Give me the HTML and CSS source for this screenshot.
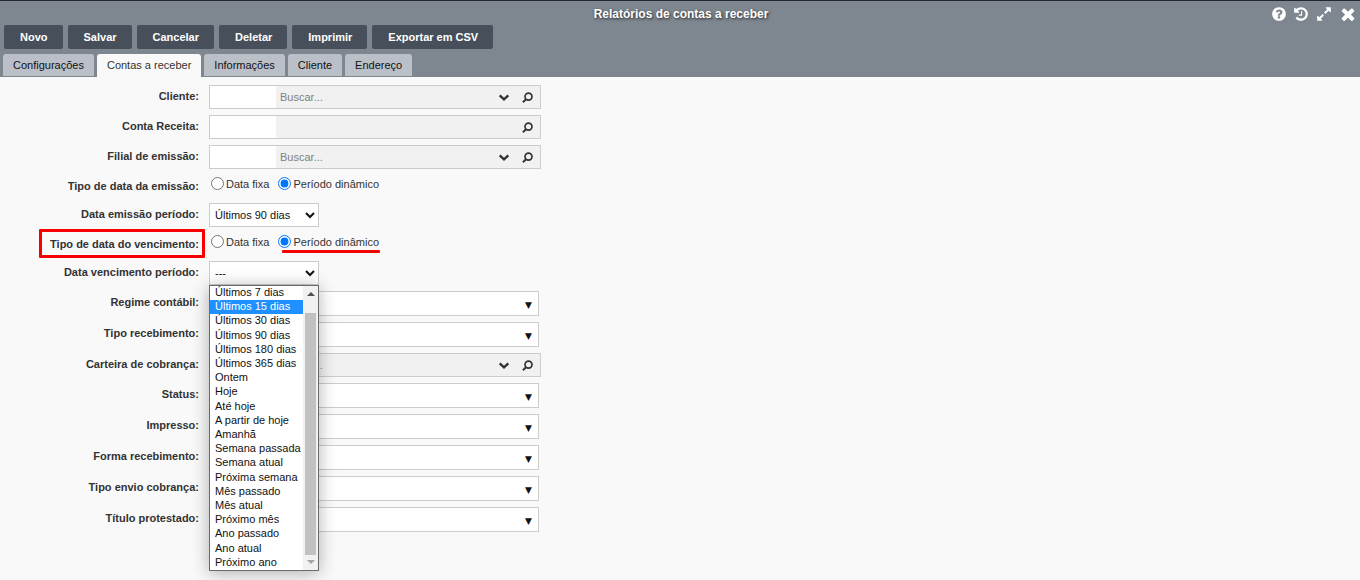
FILE: index.html
```html
<!DOCTYPE html>
<html lang="pt-BR">
<head>
<meta charset="utf-8">
<title>Relatórios de contas a receber</title>
<link rel="stylesheet" href="styles.css">
</head>
<body>
<svg class="symbols" aria-hidden="true">
  <symbol id="i-help" viewBox="0 0 1792 1792"><path d="M1024 1376v-192q0-14-9-23t-23-9h-192q-14 0-23 9t-9 23v192q0 14 9 23t23 9h192q14 0 23-9t9-23zm256-672q0-88-55.500-163t-138.500-116-170-41q-243 0-371 213-15 24 8 42l132 100q7 6 19 6 16 0 25-12 53-68 86-92 34-24 86-24 48 0 85.500 26t37.500 59q0 38-20 61t-68 45q-63 28-115.500 86.500t-52.500 125.500v36q0 14 9 23t23 9h192q14 0 23-9t9-23q0-19 21.500-49.500t54.500-49.500q32-18 49-28.500t46-35 44.500-48 28-60.500 12.500-81zm384 192q0 209-103 385.500t-279.500 279.500-385.500 103-385.500-103-279.500-279.500-103-385.500 103-385.500 279.500-279.500 385.500-103 385.500 103 279.500 279.500 103 385.500z"/></symbol>
  <symbol id="i-history" viewBox="0 0 1792 1792"><path d="M1664 896q0 156-61 298t-164 245-245 164-298 61q-172 0-327-72.500t-264-204.500q-7-10-6.500-22.500t8.500-20.500l137-138q10-9 25-9 16 2 23 12 73 95 179 147t225 52q104 0 198.500-40.500t163.500-109.500 109.500-163.500 40.500-198.500-40.500-198.500-109.500-163.500-163.500-109.500-198.500-40.500q-98 0-188 35.500t-160 101.500l137 138q31 30 14 69-17 40-59 40h-448q-26 0-45-19t-19-45v-448q0-42 40-59 39-17 69 14l130 129q107-101 244.500-156.500t284.500-55.500q156 0 298 61t245 164 164 245 61 298zm-640-288v448q0 14-9 23t-23 9h-320q-14 0-23-9t-9-23v-64q0-14 9-23t23-9h224v-352q0-14 9-23t23-9h64q14 0 23 9t9 23z"/></symbol>
  <symbol id="i-expand" viewBox="0 0 1792 1792"><path d="M883 1056q0 13-10 23l-332 332 144 144q19 19 19 45t-19 45-45 19h-448q-26 0-45-19t-19-45v-448q0-26 19-45t45-19 45 19l144 144 332-332q10-10 23-10t23 10l114 114q10 10 10 23zm781-864v448q0 26-19 45t-45 19-45-19l-144-144-332 332q-10 10-23 10t-23-10l-114-114q-10-10-10-23t10-23l332-332-144-144q-19-19-19-45t19-45 45-19h448q26 0 45 19t19 45z"/></symbol>
  <symbol id="i-close" viewBox="140 140 1512 1512"><path d="M1490 1322q0 40-28 68l-136 136q-28 28-68 28t-68-28l-294-294-294 294q-28 28-68 28t-68-28l-136-136q-28-28-28-68t28-68l294-294-294-294q-28-28-28-68t28-68l136-136q28-28 68-28t68 28l294 294 294-294q28-28 68-28t68 28l136 136q28 28 28 68t-28 68l-294 294 294 294q28 28 28 68z"/></symbol>
  <symbol id="i-chevron" viewBox="0 0 12 12"><path d="M1.700 4.300l4.300 4 4.300-4" fill="none" stroke="currentColor" stroke-width="2.400"/></symbol>
  <symbol id="i-search" viewBox="0 0 12 12"><circle cx="6.500" cy="5.600" r="3.500" fill="none" stroke="currentColor" stroke-width="1.700"/><path d="M4 8.200L.9 11.200" stroke="currentColor" stroke-width="1.900"/></symbol>
</svg>

<header class="header">
  <div class="titlebar">
    <h1 class="title">Relatórios de contas a receber</h1>
    <div class="window-actions">
      <button type="button" class="icon-button icon-narrow" aria-label="Ajuda"><svg><use href="#i-help"/></svg></button>
      <button type="button" class="icon-button icon-narrow" aria-label="Histórico"><svg><use href="#i-history"/></svg></button>
      <button type="button" class="icon-button" aria-label="Expandir"><svg><use href="#i-expand"/></svg></button>
      <button type="button" class="icon-button" aria-label="Fechar"><svg><use href="#i-close"/></svg></button>
    </div>
  </div>
  <div class="toolbar">
    <button type="button" class="button">Novo</button>
    <button type="button" class="button">Salvar</button>
    <button type="button" class="button">Cancelar</button>
    <button type="button" class="button">Deletar</button>
    <button type="button" class="button">Imprimir</button>
    <button type="button" class="button">Exportar em CSV</button>
  </div>
  <nav class="tabs">
    <a class="tab" href="#configuracoes">Configurações</a>
    <a class="tab tab-active" href="#contas" aria-current="page">Contas a receber</a>
    <a class="tab" href="#informacoes">Informações</a>
    <a class="tab" href="#cliente">Cliente</a>
    <a class="tab" href="#endereco">Endereço</a>
  </nav>
</header>

<form class="form">
  <div class="row">
    <label class="label" for="cliente-codigo">Cliente:</label>
    <div class="lookup">
      <input class="lookup-code" id="cliente-codigo" type="text">
      <input class="lookup-search" type="text" placeholder="Buscar..." aria-label="Buscar cliente">
      <button type="button" class="lookup-button" aria-label="Listar clientes"><svg><use href="#i-chevron"/></svg></button>
      <button type="button" class="lookup-button" aria-label="Pesquisar cliente"><svg><use href="#i-search"/></svg></button>
    </div>
  </div>
  <div class="row">
    <label class="label" for="conta-codigo">Conta Receita:</label>
    <div class="lookup">
      <input class="lookup-code" id="conta-codigo" type="text">
      <input class="lookup-search" type="text" readonly aria-label="Descrição da conta receita">
      <button type="button" class="lookup-button" aria-label="Pesquisar conta receita"><svg><use href="#i-search"/></svg></button>
    </div>
  </div>
  <div class="row">
    <label class="label" for="filial-codigo">Filial de emissão:</label>
    <div class="lookup">
      <input class="lookup-code" id="filial-codigo" type="text">
      <input class="lookup-search" type="text" placeholder="Buscar..." aria-label="Buscar filial">
      <button type="button" class="lookup-button" aria-label="Listar filiais"><svg><use href="#i-chevron"/></svg></button>
      <button type="button" class="lookup-button" aria-label="Pesquisar filial"><svg><use href="#i-search"/></svg></button>
    </div>
  </div>
  <div class="row" role="radiogroup" aria-labelledby="tipo-emissao">
    <span class="label" id="tipo-emissao">Tipo de data da emissão:</span>
    <div class="radios">
      <label class="radio"><input type="radio" name="emissao">Data fixa</label>
      <label class="radio"><input type="radio" name="emissao" checked>Período dinâmico</label>
    </div>
  </div>
  <div class="row">
    <label class="label" for="emissao-periodo">Data emissão período:</label>
    <select class="select" id="emissao-periodo"><option>Últimos 90 dias</option></select>
  </div>
  <div class="row" role="radiogroup" aria-labelledby="tipo-vencimento">
    <span class="label label-marked" id="tipo-vencimento">Tipo de data do vencimento:</span>
    <div class="radios">
      <label class="radio"><input type="radio" name="vencimento">Data fixa</label>
      <label class="radio radio-marked"><input type="radio" name="vencimento" checked>Período dinâmico</label>
    </div>
  </div>
  <div class="row">
    <label class="label" for="vencimento-periodo">Data vencimento período:</label>
    <div class="select-open">
      <select class="select" id="vencimento-periodo"><option>---</option></select>
      <div class="popup">
        <ul class="options" role="listbox" aria-label="Data vencimento período">
          <li role="option">Últimos 7 dias</li>
          <li role="option" class="option-current" aria-selected="true">Últimos 15 dias</li>
          <li role="option">Últimos 30 dias</li>
          <li role="option">Últimos 90 dias</li>
          <li role="option">Últimos 180 dias</li>
          <li role="option">Últimos 365 dias</li>
          <li role="option">Ontem</li>
          <li role="option">Hoje</li>
          <li role="option">Até hoje</li>
          <li role="option">A partir de hoje</li>
          <li role="option">Amanhã</li>
          <li role="option">Semana passada</li>
          <li role="option">Semana atual</li>
          <li role="option">Próxima semana</li>
          <li role="option">Mês passado</li>
          <li role="option">Mês atual</li>
          <li role="option">Próximo mês</li>
          <li role="option">Ano passado</li>
          <li role="option">Ano atual</li>
          <li role="option">Próximo ano</li>
        </ul>
        <div class="scrollbar" aria-hidden="true">
          <span class="scroll-up"></span>
          <span class="scroll-thumb"></span>
          <span class="scroll-down"></span>
        </div>
      </div>
    </div>
  </div>
  <div class="row">
    <label class="label" for="regime">Regime contábil:</label>
    <div class="combo"><select id="regime"><option></option></select></div>
  </div>
  <div class="row">
    <label class="label" for="tipo-recebimento">Tipo recebimento:</label>
    <div class="combo"><select id="tipo-recebimento"><option></option></select></div>
  </div>
  <div class="row">
    <label class="label" for="carteira-codigo">Carteira de cobrança:</label>
    <div class="lookup">
      <input class="lookup-code" id="carteira-codigo" type="text">
      <input class="lookup-search" type="text" placeholder="Buscar..." aria-label="Buscar carteira">
      <button type="button" class="lookup-button" aria-label="Listar carteiras"><svg><use href="#i-chevron"/></svg></button>
      <button type="button" class="lookup-button" aria-label="Pesquisar carteira"><svg><use href="#i-search"/></svg></button>
    </div>
  </div>
  <div class="row">
    <label class="label" for="status">Status:</label>
    <div class="combo"><select id="status"><option></option></select></div>
  </div>
  <div class="row">
    <label class="label" for="impresso">Impresso:</label>
    <div class="combo"><select id="impresso"><option></option></select></div>
  </div>
  <div class="row">
    <label class="label" for="forma">Forma recebimento:</label>
    <div class="combo"><select id="forma"><option></option></select></div>
  </div>
  <div class="row">
    <label class="label" for="envio">Tipo envio cobrança:</label>
    <div class="combo"><select id="envio"><option></option></select></div>
  </div>
  <div class="row">
    <label class="label" for="protestado">Título protestado:</label>
    <div class="combo"><select id="protestado"><option></option></select></div>
  </div>
</form>
</body>
</html>
```
FILE: styles.css
```css
*, *::before, *::after { box-sizing: border-box; }

body {
  min-height: 100vh;
  margin: 0;
  background: #f9f9f9;
  color: #333;
  font: 11px/18px "Liberation Sans", Arial, sans-serif;
}

button, input, select { font: inherit; color: inherit; margin: 0; }

.symbols { display: none; }

/* Header */
.header {
  background: #7e8790;
  border-top: 1px solid #25252c;
}

.titlebar {
  display: grid;
  grid-template-columns: 1fr auto 1fr;
  align-items: center;
  height: 24px;
  padding: 2px 4px 0 6px;
}

.title {
  grid-column: 2;
  margin: 0;
  color: #fff;
  font-size: 12px;
  font-weight: bold;
  line-height: 20px;
  text-shadow: 1px 1px 3px #222;
}

.window-actions {
  display: flex;
  justify-content: flex-end;
  gap: 8px;
}

.icon-button {
  display: flex;
  justify-content: center;
  width: 16px;
  padding: 0;
  border: 0;
  background: none;
  color: #fff;
}

.icon-narrow { width: 14px; }

.icon-button svg { flex: none; width: 16px; height: 16px; fill: currentColor; }

.toolbar {
  display: flex;
  gap: 5px;
  padding: 0 4px;
}

.button {
  height: 24px;
  padding: 0 15px 0 16px;
  border: 0;
  border-radius: 2px;
  background: #47505a;
  color: #fff;
  font-weight: bold;
}

.tabs {
  display: flex;
  gap: 3px;
  padding: 5px 3px 0;
}

.tab {
  height: 22px;
  padding: 0 10px;
  border-radius: 3px 3px 0 0;
  background: #bbc0c8;
  color: #111;
  line-height: 22px;
  text-decoration: none;
}

.tab-active {
  height: 23px;
  background: #f9f9f9;
  color: #333;
}

/* Form */
.form {
  display: flex;
  flex-direction: column;
  gap: 6px;
  padding: 8px 0;
}

.row {
  display: flex;
  align-items: flex-start;
  gap: 10px;
}

.label {
  width: 199px;
  font-weight: bold;
  line-height: 22px;
  text-align: right;
}

.lookup {
  display: flex;
  width: 332px;
  height: 24px;
  border: 1px solid #ccc;
  background: #f1f1f1;
}

.lookup input {
  min-width: 0;
  padding: 0 4px;
  border: 0;
  outline: 0;
}

.lookup .lookup-code { width: 66px; background: #fff; }

.lookup .lookup-search { flex: 1; background: transparent; }

.lookup-search::placeholder { color: #808080; }

.lookup-button {
  display: flex;
  align-items: center;
  justify-content: center;
  width: 24px;
  padding: 0;
  border: 0;
  background: none;
}

.lookup-button svg { width: 12px; height: 12px; }

.radios { display: flex; gap: 7px; }

.radio { display: flex; align-items: center; }

.radio input { width: 13px; height: 13px; margin: 0 2px 1px; }

.select {
  display: block;
  width: 110px;
  height: 24px;
  padding: 0 1px;
  border: 1px solid #ccc;
  border-radius: 0;
  background-color: #fff;
  color: #111;
}

.combo { position: relative; }

.combo select {
  display: block;
  width: 330px;
  height: 25px;
  padding: 0 24px 0 4px;
  border: 1px solid #ccc;
  border-radius: 0;
  background: #fff;
  appearance: none;
}

.combo::after {
  content: "▼";
  position: absolute;
  top: 5px;
  right: 7px;
  color: #111;
  font-family: "DejaVu Sans", sans-serif;
  font-size: 9px;
  pointer-events: none;
}

/* Highlight marks */
.label-marked, .radio-marked { position: relative; }

.label-marked::after {
  content: "";
  position: absolute;
  top: -4px;
  right: -6px;
  width: 166px;
  height: 29px;
  border: 3px solid #f80000;
  border-radius: 1px;
}

.radio-marked::after {
  content: "";
  position: absolute;
  top: 17px;
  left: 6px;
  right: -1px;
  height: 3px;
  border-radius: 1px;
  background: #f80000;
}

/* Open option list */
.select-open { position: relative; }

.popup {
  position: absolute;
  z-index: 2;
  top: 100%;
  left: 0;
  display: flex;
  width: 110px;
  height: 286px;
  border: 1px solid #6b6b6b;
  background: #fff;
  box-shadow: 0 2px 16px rgba(0, 0, 0, 0.3);
}

.options {
  display: flex;
  flex: 1;
  flex-direction: column;
  justify-content: space-between;
  min-width: 0;
  margin: 0;
  padding: 0;
  color: #111;
  line-height: 12px;
  list-style: none;
  white-space: nowrap;
}

.options li { padding: 0 0 2px 5px; }

.options .option-current { background: #1e90ff; color: #fff; }

.scrollbar {
  display: flex;
  flex-direction: column;
  align-items: center;
  gap: 5px;
  width: 15px;
  padding: 6px 0;
  background: #f1f1f1;
}

.scroll-up, .scroll-down {
  border: 4px solid transparent;
}

.scroll-up { border-top: 0; border-bottom-color: #505050; }

.scroll-down { border-bottom: 0; border-top-color: #a3a3a3; }

.scroll-thumb {
  flex: 1;
  width: 11px;
  margin-top: 12px;
  background: #c1c1c1;
}
```
